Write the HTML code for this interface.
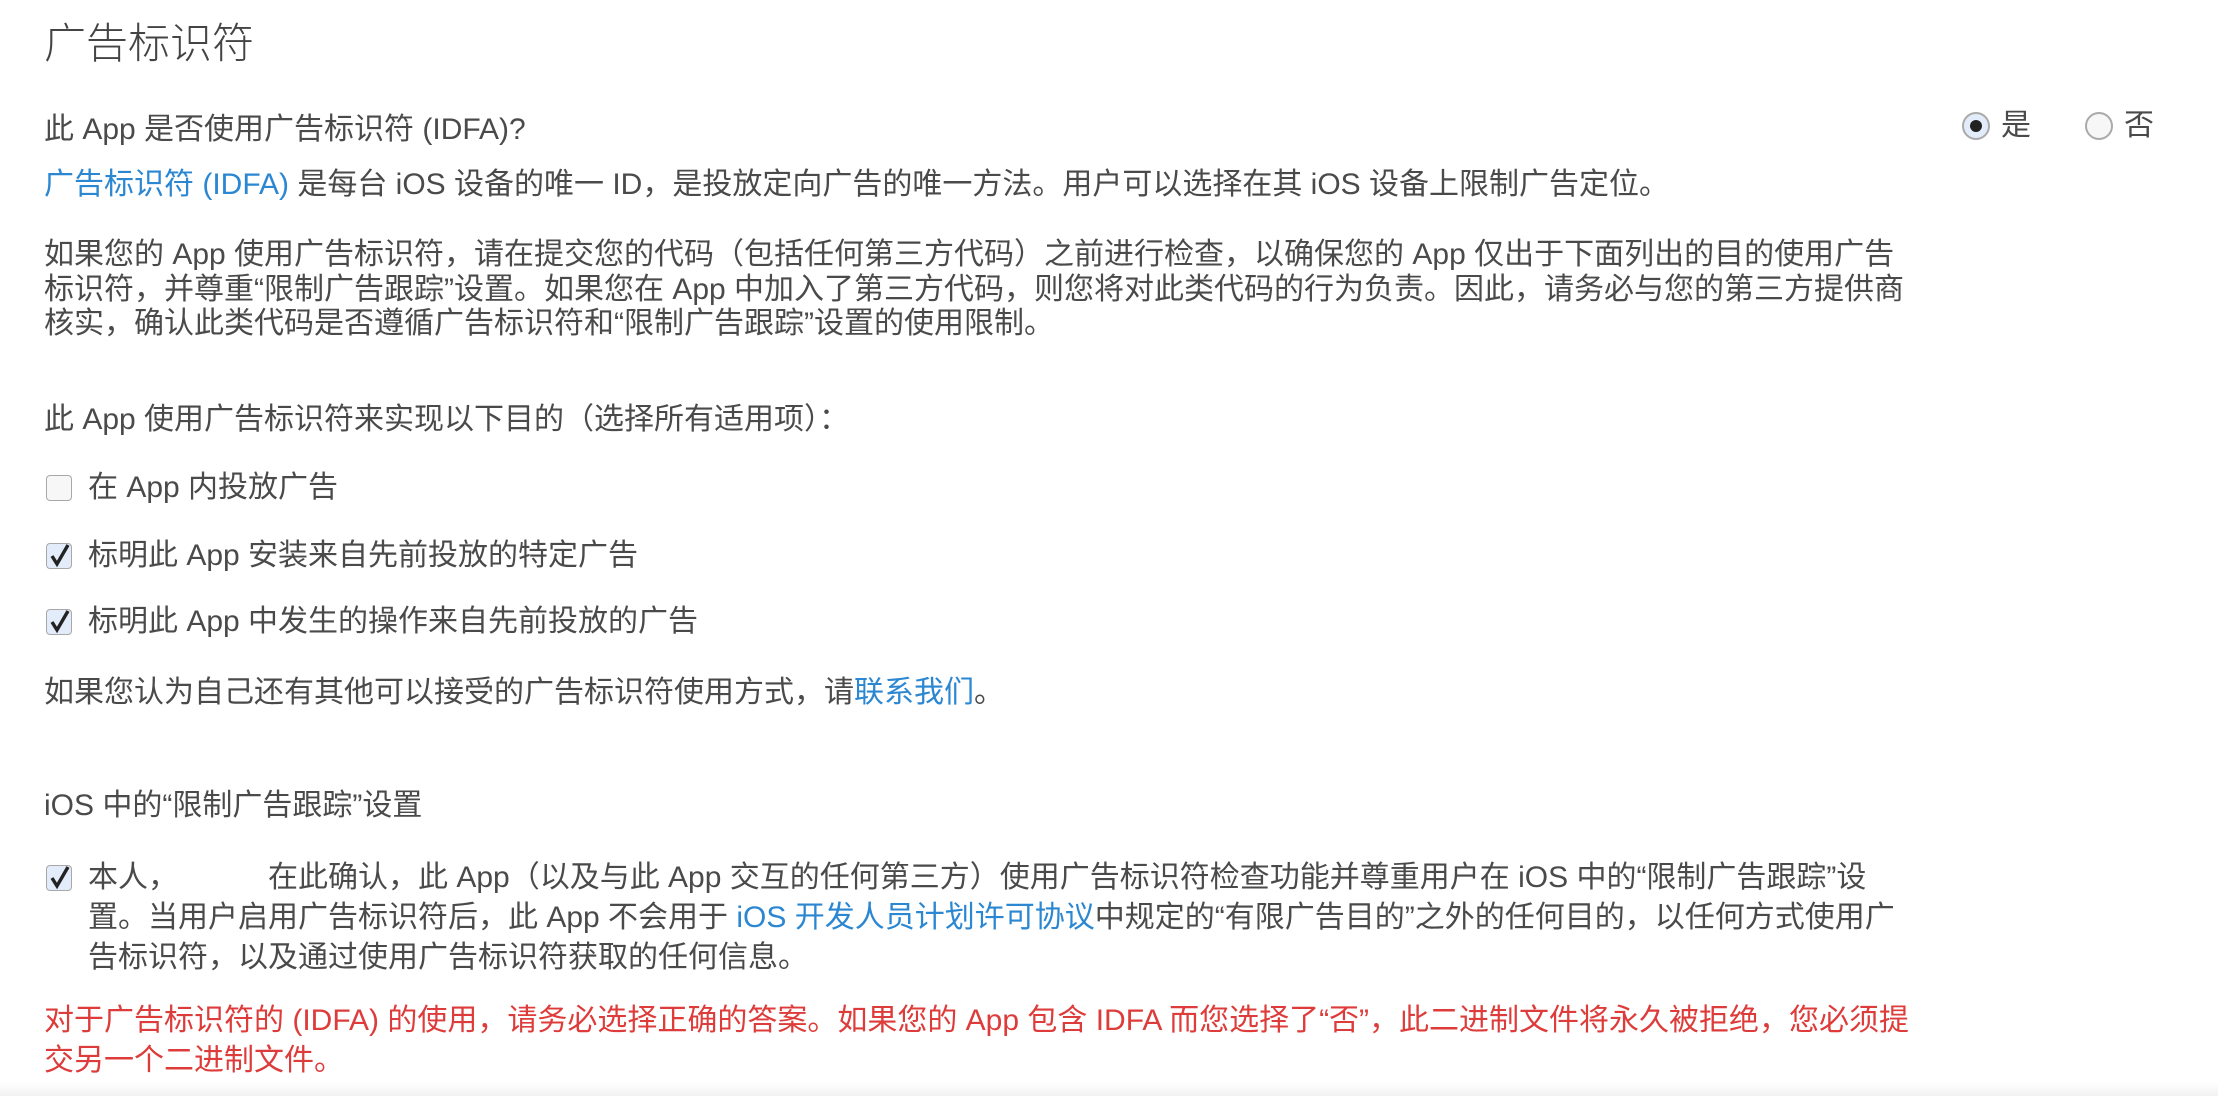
<!DOCTYPE html>
<html><head><meta charset="utf-8"><style>
html,body{margin:0;padding:0;background:#fff;}
body{width:2218px;height:1096px;position:relative;overflow:hidden;font-family:"Liberation Sans","Noto Sans CJK SC",sans-serif;color:#4a4a4a;}
.l{position:absolute;white-space:nowrap;font-size:30px;line-height:36px;height:36px;}
.t{position:absolute;left:44px;top:18px;font-size:42px;line-height:52px;color:#444;font-weight:300;}
a{color:#2b87d1;text-decoration:none;}
.red{color:#dd3c3a;}
.cb{position:absolute;width:24px;height:24px;border:1.5px solid #a8a8a8;border-radius:4px;background:#f7f7f7;}
.cb.on{background:#e3ecfa;}
.cb svg{position:absolute;left:1px;top:-3px;}
.rd{position:absolute;width:24px;height:24px;border:2px solid #aaa;border-radius:50%;background:#f7f7f7;}
.rd.on{background:#e3ecfa;}
.rd.on::after{content:"";position:absolute;left:6px;top:6px;width:12px;height:12px;border-radius:50%;background:#222;}
.bot{position:absolute;left:0;right:0;bottom:0;height:14px;background:linear-gradient(#fff,#f2f2f2);}
</style></head><body>
<div class="t">广告标识符</div>
<div class="l" style="left:44px;top:112px">此 App 是否使用广告标识符 (IDFA)?</div>
<div class="rd on" style="left:1962px;top:112px"></div>
<div class="l" style="left:2001px;top:108px">是</div>
<div class="rd" style="left:2085px;top:112px"></div>
<div class="l" style="left:2124px;top:108px">否</div>

<div class="l" style="left:44px;top:167px"><a>广告标识符 (IDFA)</a> 是每台 iOS 设备的唯一 ID，是投放定向广告的唯一方法。用户可以选择在其 iOS 设备上限制广告定位。</div>

<div class="l" style="left:44px;top:237px">如果您的 App 使用广告标识符，请在提交您的代码（包括任何第三方代码）之前进行检查，以确保您的 App 仅出于下面列出的目的使用广告</div>
<div class="l" style="left:44px;top:272px">标识符，并尊重“限制广告跟踪”设置。如果您在 App 中加入了第三方代码，则您将对此类代码的行为负责。因此，请务必与您的第三方提供商</div>
<div class="l" style="left:44px;top:306px">核实，确认此类代码是否遵循广告标识符和“限制广告跟踪”设置的使用限制。</div>

<div class="l" style="left:44px;top:402px">此 App 使用广告标识符来实现以下目的（选择所有适用项）：</div>

<div class="cb" style="left:46px;top:475px"></div>
<div class="l" style="left:88px;top:470px">在 App 内投放广告</div>
<div class="cb on" style="left:46px;top:543px"><svg width="24" height="28" viewBox="0 0 24 28"><path d="M4 15 L9 23 L20 4" fill="none" stroke="#222" stroke-width="3.4"/></svg></div>
<div class="l" style="left:88px;top:538px">标明此 App 安装来自先前投放的特定广告</div>
<div class="cb on" style="left:46px;top:609px"><svg width="24" height="28" viewBox="0 0 24 28"><path d="M4 15 L9 23 L20 4" fill="none" stroke="#222" stroke-width="3.4"/></svg></div>
<div class="l" style="left:88px;top:604px">标明此 App 中发生的操作来自先前投放的广告</div>

<div class="l" style="left:44px;top:675px">如果您认为自己还有其他可以接受的广告标识符使用方式，请<a>联系我们</a>。</div>

<div class="l" style="left:44px;top:788px">iOS 中的“限制广告跟踪”设置</div>

<div class="cb on" style="left:46px;top:865px"><svg width="24" height="28" viewBox="0 0 24 28"><path d="M4 15 L9 23 L20 4" fill="none" stroke="#222" stroke-width="3.4"/></svg></div>
<div class="l" style="left:88px;top:860px">本人，<span style="display:inline-block;width:90px"></span>在此确认，此 App（以及与此 App 交互的任何第三方）使用广告标识符检查功能并尊重用户在 iOS 中的“限制广告跟踪”设</div>
<div class="l" style="left:88px;top:900px">置。当用户启用广告标识符后，此 App 不会用于 <a>iOS 开发人员计划许可协议</a>中规定的“有限广告目的”之外的任何目的，以任何方式使用广</div>
<div class="l" style="left:88px;top:940px">告标识符，以及通过使用广告标识符获取的任何信息。</div>

<div class="l red" style="left:44px;top:1003px">对于广告标识符的 (IDFA) 的使用，请务必选择正确的答案。如果您的 App 包含 IDFA 而您选择了“否”，此二进制文件将永久被拒绝，您必须提</div>
<div class="l red" style="left:44px;top:1043px">交另一个二进制文件。</div>
<div class="bot"></div>
</body></html>
